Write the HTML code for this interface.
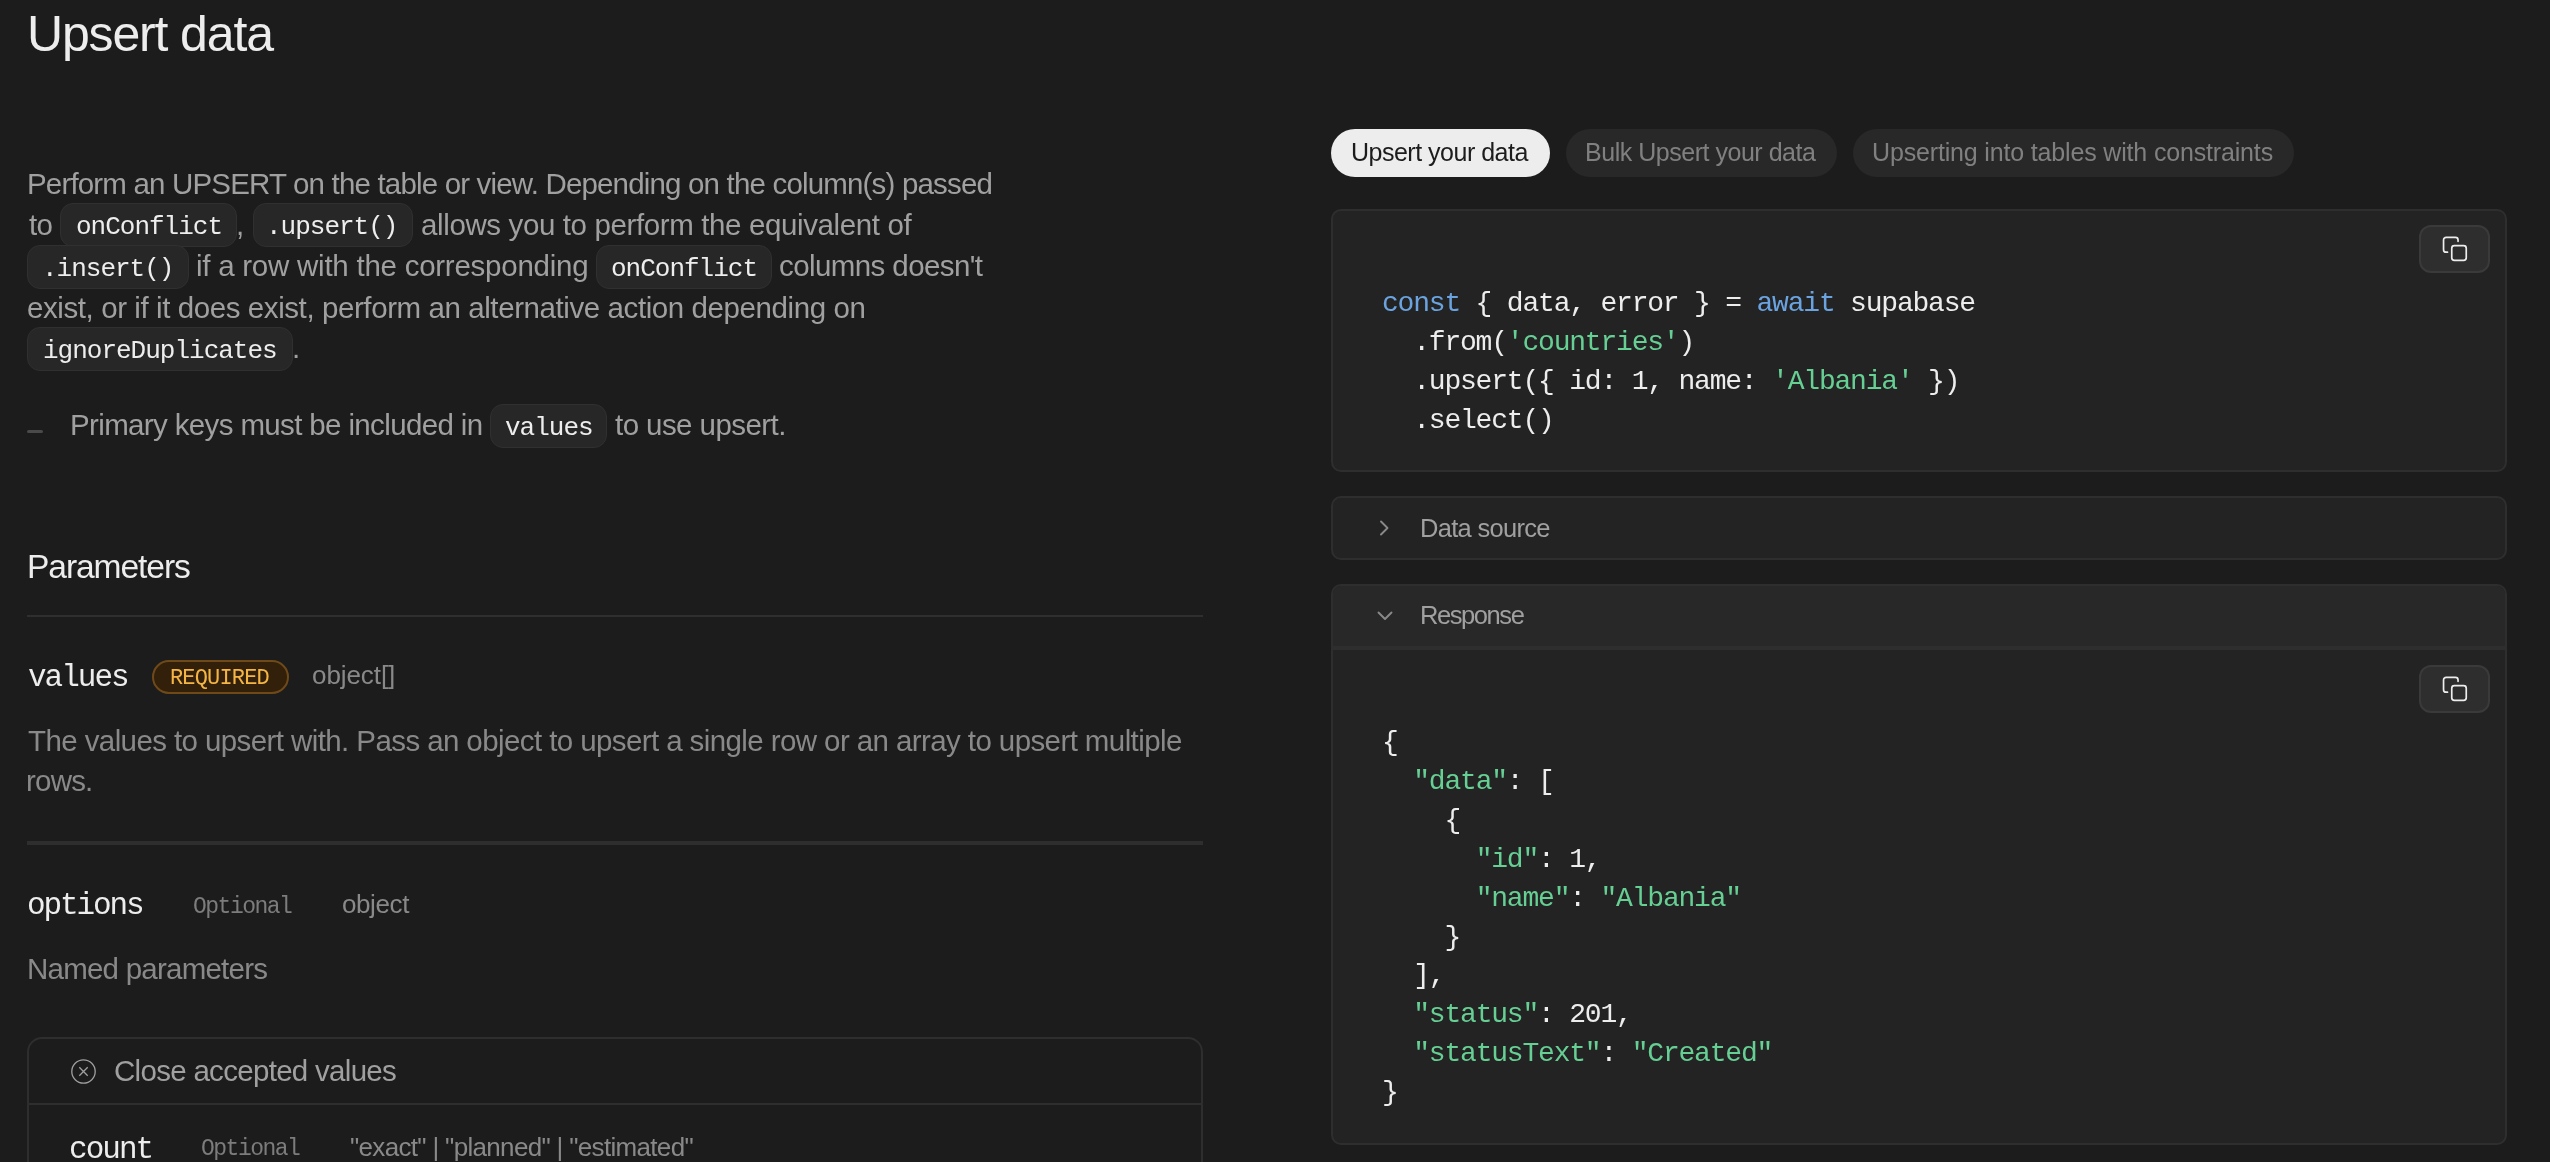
<!DOCTYPE html><html><head><meta charset="utf-8"><style>
*{box-sizing:border-box;margin:0;padding:0}
html,body{width:2550px;height:1162px;overflow:hidden;background:#1c1c1c}
body{position:relative}
.t{position:absolute;white-space:pre;will-change:transform}
.b{position:absolute}
.bm{display:inline-block;width:0;height:0;vertical-align:baseline}

</style></head><body>

<div class="b" style="left:27px;top:429.5px;width:16px;height:3.5px;border-radius:2px;background:#4a4a4a"></div>
<div class="b" style="left:27px;top:615px;width:1176px;height:2px;background:#2f2f2f"></div>
<div class="b" style="left:152px;top:660px;width:137px;height:34px;border:2px solid #6f4a18;border-radius:17px;background:#32200a"></div>
<div class="b" style="left:27px;top:841px;width:1176px;height:4px;background:#2e2e2e"></div>
<div class="b" style="left:27px;top:1037px;width:1176px;height:200px;border:2px solid #2e2e2e;border-radius:15px"></div>
<div class="b" style="left:28px;top:1102.5px;width:1174px;height:2px;background:#2e2e2e"></div>
<svg class="b" style="left:70.5px;top:1058.5px" width="25" height="25" viewBox="0 0 25 25"><circle cx="12.5" cy="12.5" r="11.7" fill="none" stroke="#a0a0a0" stroke-width="1.3"/><path d="M8.3 8.3L16.7 16.7M16.7 8.3L8.3 16.7" stroke="#a0a0a0" stroke-width="1.3"/></svg>

<div class="b" style="left:1331px;top:129px;width:219px;height:48px;border-radius:24px;background:#ededed"></div>
<div class="b" style="left:1566px;top:129px;width:271px;height:48px;border-radius:24px;background:#282828"></div>
<div class="b" style="left:1853px;top:129px;width:441px;height:48px;border-radius:24px;background:#282828"></div>

<div class="b" style="left:1331px;top:209px;width:1176px;height:263px;border:2px solid #2e2e2e;border-radius:10px;background:#232323"></div>
<div class="b" style="left:2419px;top:225px;width:71px;height:48px;border:2px solid #3a3a3a;border-radius:12px;background:#2e2e2e"></div>
<div class="b" style="left:2440px;top:234px;width:30px;height:30px"><svg width="30" height="30" viewBox="0 0 30 30" fill="none" stroke="#ededed" stroke-width="1.7" stroke-linecap="round" stroke-linejoin="round"><rect x="11.75" y="11.65" width="14.5" height="14.8" rx="2.6"/><path d="M7.5 18.2H6.1A2.55 2.55 0 0 1 3.55 15.65V5.9A2.55 2.55 0 0 1 6.1 3.35H15.5A2.55 2.55 0 0 1 18.05 5.9V7.3"/></svg></div>

<div class="b" style="left:1331px;top:496px;width:1176px;height:64px;border:2px solid #2e2e2e;border-radius:10px;background:#232323"></div>
<svg class="b" style="left:1375px;top:518px" width="20" height="20" viewBox="0 0 20 20"><path d="M6 3.5L12.5 10L6 16.5" fill="none" stroke="#898989" stroke-width="1.9" stroke-linecap="round" stroke-linejoin="round"/></svg>

<div class="b" style="left:1331px;top:584px;width:1176px;height:561px;border:2px solid #2e2e2e;border-radius:10px;background:#232323;overflow:hidden">
  <div style="position:absolute;left:0;top:0;right:0;height:60px;background:#282828"></div>
  <div style="position:absolute;left:0;top:60px;right:0;height:4px;background:#2e2e2e"></div>
</div>
<svg class="b" style="left:1375px;top:606px" width="20" height="20" viewBox="0 0 20 20"><path d="M3.5 6.5L10 13L16.5 6.5" fill="none" stroke="#898989" stroke-width="1.9" stroke-linecap="round" stroke-linejoin="round"/></svg>
<div class="b" style="left:2419px;top:665px;width:71px;height:48px;border:2px solid #3a3a3a;border-radius:12px;background:#2e2e2e"></div>
<div class="b" style="left:2440px;top:674px;width:30px;height:30px"><svg width="30" height="30" viewBox="0 0 30 30" fill="none" stroke="#ededed" stroke-width="1.7" stroke-linecap="round" stroke-linejoin="round"><rect x="11.75" y="11.65" width="14.5" height="14.8" rx="2.6"/><path d="M7.5 18.2H6.1A2.55 2.55 0 0 1 3.55 15.65V5.9A2.55 2.55 0 0 1 6.1 3.35H15.5A2.55 2.55 0 0 1 18.05 5.9V7.3"/></svg></div>

<div class="b" style="left:60px;top:203.3px;width:176.5px;height:44px;background:#272727;border:1.5px solid #303030;border-radius:13px"></div>
<div class="b" style="left:252.7px;top:203.3px;width:160.8px;height:44px;background:#272727;border:1.5px solid #303030;border-radius:13px"></div>
<div class="b" style="left:27.3px;top:244.89999999999998px;width:162.1px;height:44px;background:#272727;border:1.5px solid #303030;border-radius:13px"></div>
<div class="b" style="left:596px;top:244.89999999999998px;width:175.79999999999995px;height:44px;background:#272727;border:1.5px solid #303030;border-radius:13px"></div>
<div class="b" style="left:27.3px;top:326.9px;width:265.4px;height:44px;background:#272727;border:1.5px solid #303030;border-radius:13px"></div>
<div class="b" style="left:490px;top:403.7px;width:117px;height:44px;background:#272727;border:1.5px solid #303030;border-radius:13px"></div>
<div class="t" id="title" style="left:27.40px;top:2.50px;font-family:'Liberation Sans',sans-serif;font-size:50px;line-height:62px;letter-spacing:-1.150px;color:#ededed;">Upsert data</div>
<div class="t" id="p1" style="left:26.80px;top:165.40px;font-family:'Liberation Sans',sans-serif;font-size:29.5px;line-height:37px;letter-spacing:-0.827px;color:#a0a0a0;">Perform an UPSERT on the table or view. Depending on the column(s) passed</div>
<div class="t" id="p2a" style="left:29.00px;top:205.61px;font-family:'Liberation Sans',sans-serif;font-size:29.5px;line-height:37px;letter-spacing:-0.800px;color:#a0a0a0;">to</div>
<div class="t" id="p2b" style="left:236.00px;top:205.61px;font-family:'Liberation Sans',sans-serif;font-size:29.5px;line-height:37px;letter-spacing:-0.800px;color:#a0a0a0;">,</div>
<div class="t" id="p2c" style="left:421.00px;top:205.61px;font-family:'Liberation Sans',sans-serif;font-size:29.5px;line-height:37px;letter-spacing:-0.378px;color:#a0a0a0;">allows you to perform the equivalent of</div>
<div class="t" id="p3a" style="left:195.60px;top:246.90px;font-family:'Liberation Sans',sans-serif;font-size:29.5px;line-height:37px;letter-spacing:-0.250px;color:#a0a0a0;">if a row with the corresponding</div>
<div class="t" id="p3b" style="left:779.40px;top:246.90px;font-family:'Liberation Sans',sans-serif;font-size:29.5px;line-height:37px;letter-spacing:-0.586px;color:#a0a0a0;">columns doesn't</div>
<div class="t" id="p4" style="left:27.20px;top:288.90px;font-family:'Liberation Sans',sans-serif;font-size:29.5px;line-height:37px;letter-spacing:-0.415px;color:#a0a0a0;">exist, or if it does exist, perform an alternative action depending on</div>
<div class="t" id="p5" style="left:292.00px;top:328.90px;font-family:'Liberation Sans',sans-serif;font-size:29.5px;line-height:37px;letter-spacing:-0.800px;color:#a0a0a0;">.</div>
<div class="t" id="li1" style="left:69.80px;top:405.71px;font-family:'Liberation Sans',sans-serif;font-size:29.5px;line-height:37px;letter-spacing:-0.637px;color:#a0a0a0;">Primary keys must be included in</div>
<div class="t" id="li2" style="left:615.00px;top:405.71px;font-family:'Liberation Sans',sans-serif;font-size:29.5px;line-height:37px;letter-spacing:-0.569px;color:#a0a0a0;">to use upsert.</div>
<div class="t" id="c1" style="left:75.60px;top:211.31px;font-family:'Liberation Mono',monospace;font-size:26px;line-height:32px;letter-spacing:-1.000px;color:#ededed;">onConflict</div>
<div class="t" id="c2" style="left:265.90px;top:211.31px;font-family:'Liberation Mono',monospace;font-size:26px;line-height:32px;letter-spacing:-1.000px;color:#ededed;">.upsert()</div>
<div class="t" id="c3" style="left:41.55px;top:252.90px;font-family:'Liberation Mono',monospace;font-size:26px;line-height:32px;letter-spacing:-1.000px;color:#ededed;">.insert()</div>
<div class="t" id="c4" style="left:610.60px;top:252.90px;font-family:'Liberation Mono',monospace;font-size:26px;line-height:32px;letter-spacing:-1.000px;color:#ededed;">onConflict</div>
<div class="t" id="c5" style="left:42.70px;top:334.90px;font-family:'Liberation Mono',monospace;font-size:26px;line-height:32px;letter-spacing:-1.000px;color:#ededed;">ignoreDuplicates</div>
<div class="t" id="c6" style="left:504.50px;top:411.71px;font-family:'Liberation Mono',monospace;font-size:26px;line-height:32px;letter-spacing:-1.000px;color:#ededed;">values</div>
<div class="t" id="params" style="left:27.00px;top:546.30px;font-family:'Liberation Sans',sans-serif;font-size:33.6px;line-height:42px;letter-spacing:-1.077px;color:#ededed;">Parameters</div>
<div class="t" id="values" style="left:27.60px;top:657.81px;font-family:'Liberation Mono',monospace;font-size:31px;line-height:39px;letter-spacing:-2.000px;color:#ededed;">values</div>
<div class="t" id="req" style="left:169.60px;top:665.00px;font-family:'Liberation Mono',monospace;font-size:22px;line-height:28px;letter-spacing:-0.842px;color:#f5b544;">REQUIRED</div>
<div class="t" id="objarr" style="left:312.20px;top:659.01px;font-family:'Liberation Sans',sans-serif;font-size:26px;line-height:32px;letter-spacing:-0.073px;color:#898989;">object[]</div>
<div class="t" id="vd1" style="left:27.80px;top:722.11px;font-family:'Liberation Sans',sans-serif;font-size:29.5px;line-height:37px;letter-spacing:-0.593px;color:#898989;">The values to upsert with. Pass an object to upsert a single row or an array to upsert multiple</div>
<div class="t" id="vd2" style="left:25.80px;top:762.11px;font-family:'Liberation Sans',sans-serif;font-size:29.5px;line-height:37px;letter-spacing:-0.800px;color:#898989;">rows.</div>
<div class="t" id="options" style="left:27.00px;top:886.11px;font-family:'Liberation Mono',monospace;font-size:31px;line-height:39px;letter-spacing:-2.116px;color:#ededed;">options</div>
<div class="t" id="opt1" style="left:193.20px;top:892.50px;font-family:'Liberation Mono',monospace;font-size:23px;line-height:29px;letter-spacing:-1.500px;color:#7c7c7c;">Optional</div>
<div class="t" id="obj" style="left:341.80px;top:888.21px;font-family:'Liberation Sans',sans-serif;font-size:26px;line-height:32px;letter-spacing:-0.400px;color:#898989;">object</div>
<div class="t" id="named" style="left:27.00px;top:949.71px;font-family:'Liberation Sans',sans-serif;font-size:29.5px;line-height:37px;letter-spacing:-0.767px;color:#898989;">Named parameters</div>
<div class="t" id="close" style="left:113.60px;top:1051.71px;font-family:'Liberation Sans',sans-serif;font-size:29.5px;line-height:37px;letter-spacing:-0.700px;color:#a0a0a0;">Close accepted values</div>
<div class="t" id="count" style="left:69.00px;top:1129.51px;font-family:'Liberation Mono',monospace;font-size:31px;line-height:39px;letter-spacing:-1.950px;color:#ededed;">count</div>
<div class="t" id="opt2" style="left:201.00px;top:1135.21px;font-family:'Liberation Mono',monospace;font-size:23px;line-height:29px;letter-spacing:-1.501px;color:#7c7c7c;">Optional</div>
<div class="t" id="enum" style="left:350.20px;top:1131.41px;font-family:'Liberation Sans',sans-serif;font-size:26px;line-height:32px;letter-spacing:-0.672px;color:#898989;">"exact" | "planned" | "estimated"</div>
<div class="t" id="tab1" style="left:1350.80px;top:136.71px;font-family:'Liberation Sans',sans-serif;font-size:25px;line-height:31px;letter-spacing:-0.500px;color:#1c1c1c;">Upsert your data</div>
<div class="t" id="tab2" style="left:1584.80px;top:136.71px;font-family:'Liberation Sans',sans-serif;font-size:25px;line-height:31px;letter-spacing:-0.475px;color:#808080;">Bulk Upsert your data</div>
<div class="t" id="tab3" style="left:1872.00px;top:136.71px;font-family:'Liberation Sans',sans-serif;font-size:25px;line-height:31px;letter-spacing:-0.162px;color:#808080;">Upserting into tables with constraints</div>
<div class="t" id="ds" style="left:1420.40px;top:511.51px;font-family:'Liberation Sans',sans-serif;font-size:25.5px;line-height:32px;letter-spacing:-0.700px;color:#a0a0a0;">Data source</div>
<div class="t" id="resp" style="left:1420.40px;top:598.81px;font-family:'Liberation Sans',sans-serif;font-size:25.5px;line-height:32px;letter-spacing:-1.430px;color:#a0a0a0;">Response</div>
<div class="t" id="code1" style="left:1382.00px;top:284.00px;font-family:'Liberation Mono',monospace;font-size:28px;line-height:39px;letter-spacing:-1.200px;color:#ededed;"><span style="color:#6aa3e0">const</span> { data, error } = <span style="color:#6aa3e0">await</span> supabase
  .from(<span style="color:#66cf94">'countries'</span>)
  .upsert({ id: 1, name: <span style="color:#66cf94">'Albania'</span> })
  .select()</div>
<div class="t" id="code2" style="left:1381.80px;top:724.00px;font-family:'Liberation Mono',monospace;font-size:28px;line-height:38.9px;letter-spacing:-1.200px;color:#ededed;">{
  <span style="color:#66cf94">"data"</span>: [
    {
      <span style="color:#66cf94">"id"</span>: 1,
      <span style="color:#66cf94">"name"</span>: <span style="color:#66cf94">"Albania"</span>
    }
  ],
  <span style="color:#66cf94">"status"</span>: 201,
  <span style="color:#66cf94">"statusText"</span>: <span style="color:#66cf94">"Created"</span>
}</div>

</body></html>
